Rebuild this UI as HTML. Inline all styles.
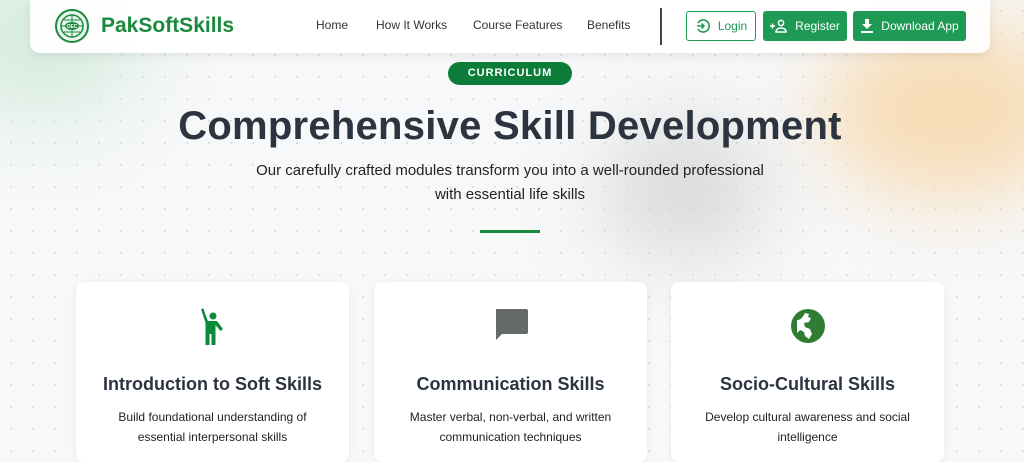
<!DOCTYPE html>
<html><head><meta charset="utf-8"><style>
*{margin:0;padding:0;box-sizing:border-box}
body{width:1024px;height:454px;overflow:hidden;font-family:"Liberation Sans",sans-serif;background:#f7f8f9;position:relative;
background-image:radial-gradient(circle,#dcdfe3 1px,transparent 1.2px);background-size:22px 22px;}
.blob{position:absolute;border-radius:50%;filter:blur(40px)}
nav{position:absolute;left:30px;top:0;width:960px;height:53px;background:rgba(255,255,255,.93);border-radius:0 0 10px 10px;box-shadow:0 3px 10px rgba(0,0,0,.08)}
.logo{position:absolute;left:25px;top:9px;width:34px;height:34px;border-radius:50%;border:2px solid #1a8a3e;background:#e9f5ec}
.brand{position:absolute;left:71px;top:14px;font-size:21px;font-weight:bold;color:#1a8a3e}
.lnk{position:absolute;top:18px;font-size:12px;color:#333}
.div{position:absolute;left:630px;top:8px;width:2px;height:37px;background:#444}
.btn{position:absolute;top:11px;height:30px;border-radius:3px;font-size:12px;display:flex;align-items:center;justify-content:center;gap:7px;background:#1e9a55;color:#fff}
.pill{position:absolute;left:448px;top:62px;width:124px;height:23px;border-radius:12px;background:#0b7d38;color:#fff;font-size:11px;font-weight:bold;letter-spacing:1px;text-align:center;line-height:23px}
h1{position:absolute;left:0;width:1020px;text-align:center;top:104px;font-size:40px;color:#2c3440;font-weight:bold;letter-spacing:0.25px}
.sub{position:absolute;left:0;width:1020px;text-align:center;top:159px;font-size:15px;line-height:24px;color:#222}
.bar{position:absolute;left:480px;top:230px;width:60px;height:3px;background:#1a8a3e}
.card{position:absolute;top:282px;width:273px;height:180px;background:#fff;border-radius:8px;box-shadow:0 2px 8px rgba(0,0,0,.06);text-align:center}
.card h3{position:absolute;top:92px;width:100%;font-size:18px;color:#2c3440}
.card p{position:absolute;top:125px;left:20px;right:20px;font-size:12px;line-height:20px;color:#222}
.card svg{position:absolute;top:25px;left:50%;margin-left:-19px}
</style></head><body>
<div class="blob" style="left:-60px;top:-40px;width:200px;height:160px;background:#d7ecdf"></div>
<div class="blob" style="left:820px;top:20px;width:260px;height:180px;background:#f7dcb6"></div>
<div class="blob" style="left:600px;top:120px;width:170px;height:140px;background:#d4d4d4;opacity:.8"></div>
<nav>
<div class="logo"><svg width="30" height="30" viewBox="0 0 30 30"><circle cx="15" cy="15" r="11" fill="none" stroke="#1a8a3e" stroke-width="1.5"/><path d="M4 15h22M15 4v22M7 9h16M7 21h16" stroke="#1a8a3e" stroke-width="1"/><ellipse cx="15" cy="15" rx="7" ry="4" fill="#1a8a3e"/><text x="15" y="17" font-size="5" fill="#fff" text-anchor="middle" font-weight="bold">OEC</text></svg></div>
<div class="brand">PakSoftSkills</div>
<div class="lnk" style="left:286px">Home</div>
<div class="lnk" style="left:346px">How It Works</div>
<div class="lnk" style="left:443px">Course Features</div>
<div class="lnk" style="left:557px">Benefits</div>
<div class="div"></div>
<div class="btn" style="left:656px;width:70px;background:#fff;color:#1e9a55;border:1.5px solid #1e9a55"><svg width="16" height="16" viewBox="0 0 16 16"><path d="M3 5A6 6 0 1 1 3 11" fill="none" stroke="#1e9a55" stroke-width="1.6"/><path d="M2 8h7M6.5 5.5 9 8l-2.5 2.5" fill="none" stroke="#1e9a55" stroke-width="1.6"/></svg>Login</div>
<div class="btn" style="left:733px;width:84px"><svg width="18" height="14" viewBox="0 0 18 14"><path d="M0 7h5M2.5 4.5v5" stroke="#fff" stroke-width="1.5"/><circle cx="11" cy="4" r="2.6" fill="none" stroke="#fff" stroke-width="1.5"/><path d="M6 13c0-3 2.5-4 5-4s5 1 5 4z" fill="none" stroke="#fff" stroke-width="1.5"/></svg>Register</div>
<div class="btn" style="left:823px;width:113px"><svg width="14" height="16" viewBox="0 0 14 16"><path d="M5 1h4v5h3l-5 5-5-5h3z" fill="#fff"/><rect x="1" y="13" width="12" height="2" fill="#fff"/></svg>Download App</div>
</nav>
<div class="pill">CURRICULUM</div>
<h1>Comprehensive Skill Development</h1>
<div class="sub">Our carefully crafted modules transform you into a well-rounded professional<br>with essential life skills</div>
<div class="bar"></div>
<div class="card" style="left:76px"><svg width="38" height="40" viewBox="0 0 38 40"><circle cx="19" cy="9" r="3.5" fill="#0b8a3a"/><path d="M7 2l2.5-.5 2 6.5 2.5 6h9l6 8-2.5 2-5-6v20h-4V27h-2v11h-4V16z" fill="#0b8a3a"/></svg><h3>Introduction to Soft Skills</h3><p>Build foundational understanding of essential interpersonal skills</p></div>
<div class="card" style="left:374px"><svg width="38" height="38" viewBox="0 0 38 38"><path d="M4 2h30a2 2 0 0 1 2 2v21a2 2 0 0 1-2 2H10l-6 6z" fill="#646a6a"/></svg><h3>Communication Skills</h3><p>Master verbal, non-verbal, and written communication techniques</p></div>
<div class="card" style="left:671px"><svg width="38" height="38" viewBox="0 0 38 38"><circle cx="19" cy="19" r="17" fill="#2f7d32"/><path d="M8 13c4 0 6-3 8-7l4 1-1 3 3 1-2 4-5 1 1 4 5 2 2 5-3 5-4-3-1-4-4-2-3 3z" fill="#fff"/></svg><h3>Socio-Cultural Skills</h3><p>Develop cultural awareness and social intelligence</p></div>
</body></html>
